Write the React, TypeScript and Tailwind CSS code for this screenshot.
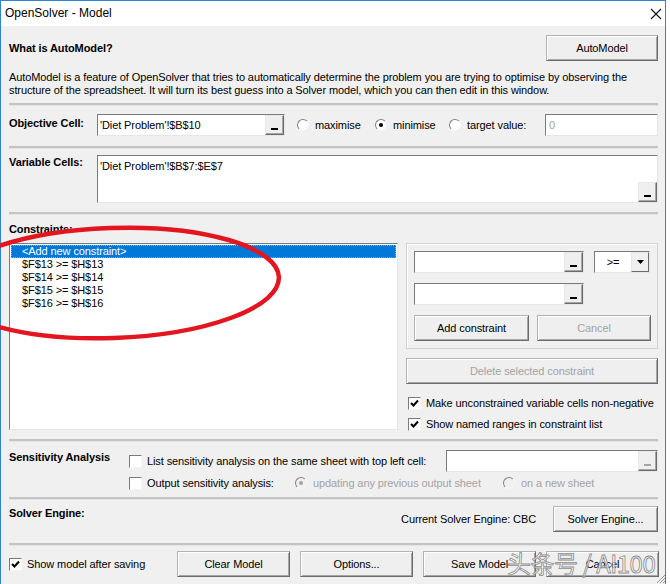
import React from "react";

type Kids = { children?: React.ReactNode; className?: string };

function Sep({ className = "" }: Kids) {
  return <div className={`h-[3px] shrink-0 bg-[#c4c4c4] border-b border-[#e4e4e4] ${className}`} />;
}

function Btn({ children, className = "", disabled = false }: Kids & { disabled?: boolean }) {
  return (
    <div
      className={`flex h-[26px] shrink-0 items-center justify-center border border-t-[#b4b4b4] border-l-[#b4b4b4] border-r-[#6b6b6b] border-b-[#6b6b6b] bg-[#efefef] shadow-[inset_1px_1px_0_#ffffff,inset_-1px_-1px_0_#a6a6a6] ${
        disabled ? "text-[#a3a3a3]" : "text-black"
      } ${className}`}
    >
      {children}
    </div>
  );
}

function PickBtn({ disabled = false }: { disabled?: boolean }) {
  return (
    <div className="flex h-[20px] w-[19px] shrink-0 items-end justify-center border border-t-[#e8e8e8] border-l-[#e8e8e8] border-r-[#6b6b6b] border-b-[#6b6b6b] bg-[#efefef] pb-[4px] shadow-[inset_-1px_-1px_0_#a6a6a6]">
      <span className={`block h-[2px] w-[7px] ${disabled ? "bg-[#a3a3a3]" : "bg-black"}`} />
    </div>
  );
}

function RefBox({ text = "", className = "", disabled = false }: { text?: string; className?: string; disabled?: boolean }) {
  return (
    <div
      className={`flex h-[22px] shrink-0 items-center border border-t-[#7a7a7a] border-l-[#7a7a7a] border-r-[#e6e6e6] border-b-[#e6e6e6] bg-white ${className}`}
    >
      <span className="flex-1 truncate pl-[2px]">{text}</span>
      <PickBtn disabled={disabled} />
    </div>
  );
}

function Radio({ label, checked = false, disabled = false, className = "" }: { label: string; checked?: boolean; disabled?: boolean; className?: string }) {
  return (
    <div className={`flex shrink-0 items-center gap-[6px] ${disabled ? "text-[#a3a3a3]" : "text-black"} ${className}`}>
      <span
        className={`flex h-[12px] w-[12px] items-center justify-center rounded-full border border-t-[#808080] border-l-[#808080] border-r-[#f6f6f6] border-b-[#f6f6f6] ${
          disabled ? "bg-[#f0f0f0]" : "bg-white"
        }`}
      >
        {checked && <span className={`block h-[4px] w-[4px] rounded-full ${disabled ? "bg-[#a3a3a3]" : "bg-black"}`} />}
      </span>
      <span>{label}</span>
    </div>
  );
}

function Check({ label, checked = false, className = "" }: { label: string; checked?: boolean; className?: string }) {
  return (
    <div className={`flex shrink-0 items-center gap-[5px] ${className}`}>
      <span className="flex h-[13px] w-[13px] items-center justify-center border border-t-[#7a7a7a] border-l-[#7a7a7a] border-r-[#f4f4f4] border-b-[#f4f4f4] bg-white">
        {checked && (
          <svg width="9" height="9" viewBox="0 0 9 9">
            <path d="M1 4 L3.5 6.5 L8 1.5" fill="none" stroke="#000" strokeWidth="2" />
          </svg>
        )}
      </span>
      <span>{label}</span>
    </div>
  );
}

export default function App() {
  const rows = ["$F$13 >= $H$13", "$F$14 >= $H$14", "$F$15 >= $H$15", "$F$16 >= $H$16"];

  return (
    <div className="relative h-[584px] w-[670px] overflow-hidden bg-white font-['Liberation_Sans',Arial,sans-serif] text-[11px] leading-[13px] tracking-[-0.1px] text-black">
      <div className="flex h-[584px] w-[666px] flex-col border border-b-0 border-[#2f83d6] bg-[#f0f0f0]">
        {/* title bar */}
        <div className="flex h-[25px] shrink-0 items-center justify-between bg-white pl-[4px] pr-[3px]">
          <span className="text-[12px] tracking-normal">OpenSolver - Model</span>
          <svg width="12" height="12" viewBox="0 0 12 12">
            <path d="M1 1 L11 11 M11 1 L1 11" stroke="#111" strokeWidth="1.1" />
          </svg>
        </div>

        <div className="flex flex-1 flex-col pl-[8px] pr-[7px]">
          {/* AutoModel */}
          <div className="mt-[9px] flex h-[26px] items-center justify-between">
            <span className="font-bold">What is AutoModel?</span>
            <Btn className="w-[112px]">AutoModel</Btn>
          </div>
          <p className="mt-[10px]">
            AutoModel is a feature of OpenSolver that tries to automatically determine the problem you are trying to optimise by observing the
            <br />
            structure of the spreadsheet. It will turn its best guess into a Solver model, which you can then edit in this window.
          </p>
          <Sep className="mt-[6px]" />

          {/* objective */}
          <div className="mt-[8px] flex h-[22px] items-start">
            <span className="w-[88px] shrink-0 pt-[3px] font-bold">Objective Cell:</span>
            <RefBox text="'Diet Problem'!$B$10" className="w-[188px]" />
            <div className="ml-[12px] flex h-[22px] items-center">
              <Radio label="maximise" className="w-[78px]" />
              <Radio label="minimise" checked className="w-[74px]" />
              <Radio label="target value:" className="w-[96px]" />
            </div>
            <div className="flex h-[22px] w-[113px] items-center border border-t-[#7a7a7a] border-l-[#7a7a7a] border-r-[#e6e6e6] border-b-[#e6e6e6] bg-white pl-[3px] text-[#a3a3a3]">
              0
            </div>
          </div>
          <Sep className="mt-[10px]" />

          {/* variable cells */}
          <div className="mt-[6px] flex h-[48px] items-start">
            <span className="w-[88px] shrink-0 pt-[1px] font-bold">Variable Cells:</span>
            <div className="flex h-[48px] flex-1 items-end border border-t-[#7a7a7a] border-l-[#7a7a7a] border-r-[#e6e6e6] border-b-[#e6e6e6] bg-white">
              <span className="flex-1 self-start pl-[2px] pt-[4px]">'Diet Problem'!$B$7:$E$7</span>
              <PickBtn />
            </div>
          </div>
          <Sep className="mt-[9px]" />

          {/* constraints */}
          <span className="mt-[8px] font-bold">Constraints:</span>
          <div className="mt-[7px] flex gap-[8px]">
            <div className="h-[187px] w-[389px] shrink-0 border border-t-[#7a7a7a] border-l-[#7a7a7a] border-r-[#e6e6e6] border-b-[#e6e6e6] bg-white p-[1px]">
              <div className="h-[13px] border border-dotted border-[#c8a060] bg-[#0078d7] pl-[10px] leading-[11px] text-white">
                &lt;Add new constraint&gt;
              </div>
              {rows.map((r) => (
                <div key={r} className="h-[13px] pl-[11px]">
                  {r}
                </div>
              ))}
            </div>

            <div className="flex w-[252px] flex-col">
              <div className="flex h-[106px] flex-col border border-[#d2d2d2] px-[7px] pt-[7px] shadow-[inset_1px_1px_0_#ffffff]">
                <div className="flex">
                  <RefBox className="w-[170px]" />
                  <div className="ml-[10px] flex h-[22px] w-[57px] items-center border border-t-[#7a7a7a] border-l-[#7a7a7a] border-r-[#e6e6e6] border-b-[#e6e6e6] bg-white">
                    <span className="flex-1 text-center">&gt;=</span>
                    <div className="flex h-[20px] w-[18px] items-center justify-center border border-t-[#e8e8e8] border-l-[#e8e8e8] border-r-[#6b6b6b] border-b-[#6b6b6b] bg-[#efefef]">
                      <svg width="7" height="4" viewBox="0 0 7 4">
                        <path d="M0 0 H7 L3.5 4 Z" fill="#000" />
                      </svg>
                    </div>
                  </div>
                </div>
                <RefBox className="mt-[10px] w-[170px]" />
                <div className="mt-[10px] flex gap-[8px]">
                  <Btn className="w-[115px]">Add constraint</Btn>
                  <Btn className="w-[114px]" disabled>
                    Cancel
                  </Btn>
                </div>
              </div>
              <Btn className="mt-[9px] w-[252px]" disabled>
                Delete selected constraint
              </Btn>
              <div className="mt-[9px] flex h-[21px] items-center pl-[2px]">
                <Check label="Make unconstrained variable cells non-negative" checked />
              </div>
              <div className="flex h-[21px] items-center pl-[2px]">
                <Check label="Show named ranges in constraint list" checked />
              </div>
            </div>
          </div>
          <Sep className="mt-[4px]" />

          {/* sensitivity */}
          <div className="mt-[8px] flex">
            <span className="w-[120px] shrink-0 pt-[1px] font-bold">Sensitivity Analysis</span>
            <div className="flex flex-1 flex-col">
              <div className="flex h-[22px] items-center">
                <Check label="List sensitivity analysis on the same sheet with top left cell:" />
                <RefBox className="ml-auto w-[212px]" disabled />
              </div>
              <div className="flex h-[22px] items-center">
                <Check label="Output sensitivity analysis:" className="w-[166px]" />
                <Radio label="updating any previous output sheet" checked disabled className="w-[208px]" />
                <Radio label="on a new sheet" disabled />
              </div>
            </div>
          </div>
          <Sep className="mt-[3px]" />

          {/* solver engine */}
          <div className="mt-[6px] flex h-[26px] items-start">
            <span className="pt-[1px] font-bold">Solver Engine:</span>
            <div className="ml-auto flex h-[26px] items-center">
              <span className="pt-[1px]">Current Solver Engine: CBC</span>
              <Btn className="ml-[17px] w-[105px]">Solver Engine...</Btn>
            </div>
          </div>
          <Sep className="mt-[11px]" />

          {/* footer */}
          <div className="mt-[5px] flex h-[26px] items-center">
            <Check label="Show model after saving" checked className="w-[168px]" />
            <div className="flex gap-[10px]">
              <Btn className="w-[113px]">Clear Model</Btn>
              <Btn className="w-[113px]">Options...</Btn>
              <Btn className="w-[113px]">Save Model</Btn>
              <Btn className="w-[113px]">Cancel</Btn>
            </div>
          </div>
        </div>
      </div>

      {/* resize grip */}
      <svg className="absolute left-[654px] top-[572px]" width="12" height="12" viewBox="0 0 12 12">
        <path d="M11 3 L3 11 M11 6 L6 11 M11 9 L9 11" stroke="#9a9a9a" strokeWidth="1" />
      </svg>

      {/* watermark */}
      <span className="pointer-events-none absolute left-[507px] top-[548px] font-['Noto_Sans_CJK_SC',sans-serif] text-[24px] leading-[30px] tracking-[-0.5px] text-white/70 [-webkit-text-stroke:0.8px_#8c8c8c]">
        头条号 / AI100
      </span>

      {/* red annotation */}
      <svg className="pointer-events-none absolute left-0 top-0" width="670" height="584" viewBox="0 0 670 584">
        <ellipse cx="112" cy="283" rx="167" ry="55" transform="rotate(-2 112 283)" fill="none" stroke="#e3161f" strokeWidth="4.5" />
      </svg>
    </div>
  );
}
